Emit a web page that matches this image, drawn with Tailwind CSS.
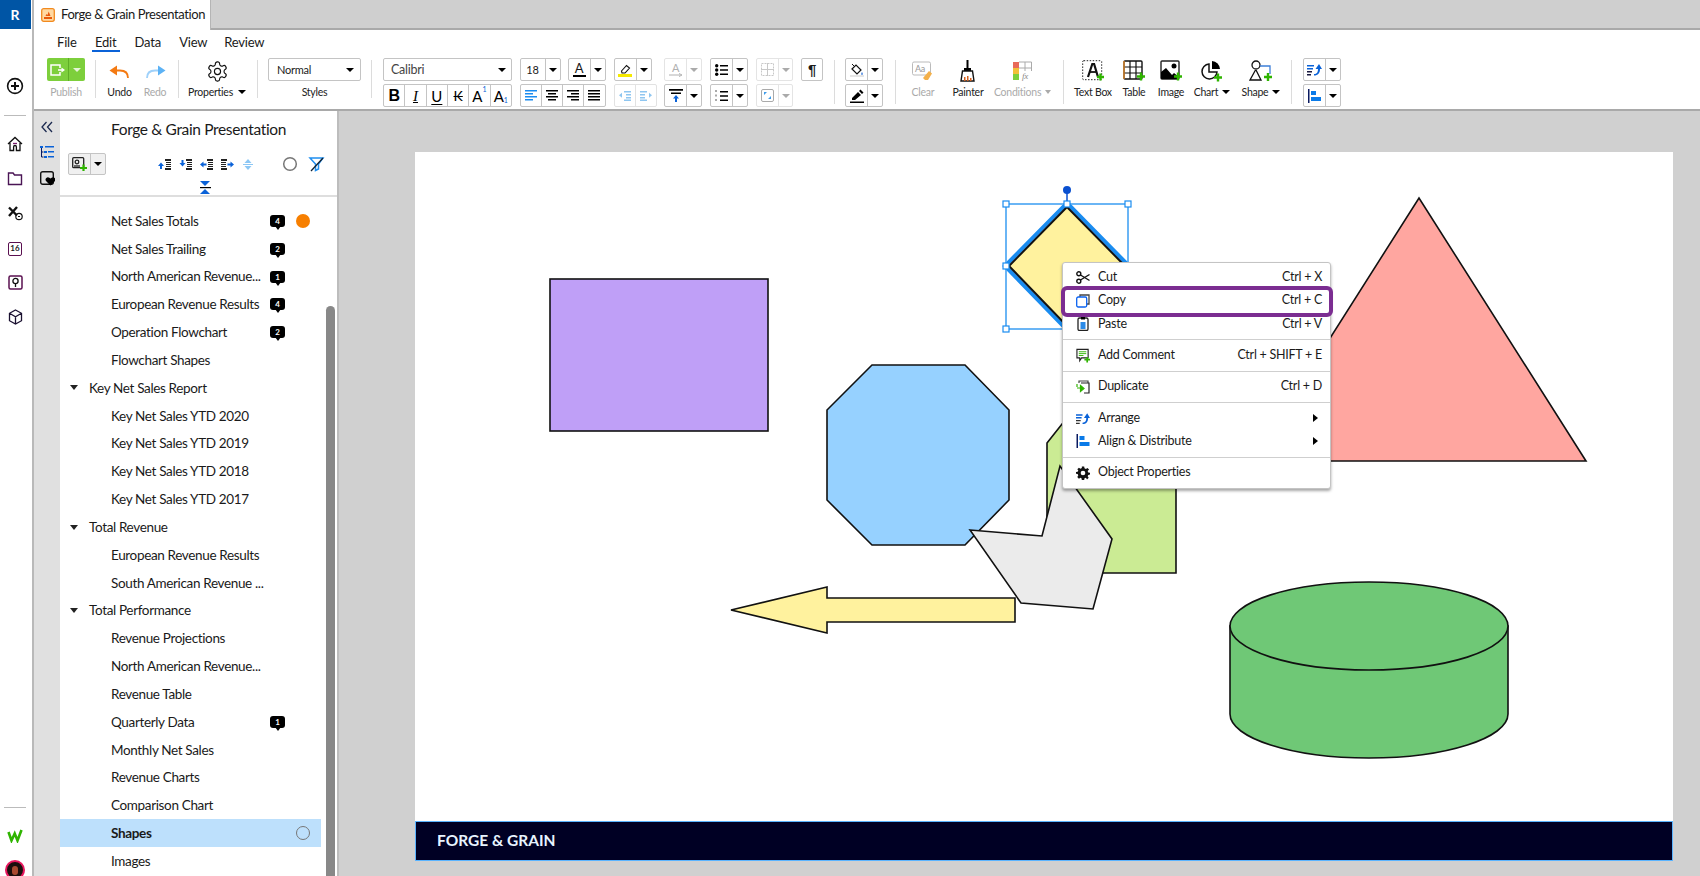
<!DOCTYPE html>
<html lang="en">
<head>
<meta charset="UTF-8">
<title>Forge &amp; Grain Presentation</title>
<script src="https://cdn.jsdelivr.net/npm/@tailwindcss/browser@4"></script>
</head>
<body class="h-screen w-[1700px] overflow-hidden flex bg-white font-[Lato,sans-serif] text-[#1a1a1a]">

<!-- left rail -->
<aside class="w-[34px] h-full shrink-0 flex flex-col items-center bg-white border-r-2 border-[#b9b9b9]">
  <div class="w-[32px] h-[29px] -ml-[2px] bg-[#0055a5] text-white font-bold text-[14px] flex items-center justify-center">R</div>
  <svg class="mt-[48px] -ml-[2px]" width="18" height="18" viewBox="0 0 18 18" fill="none" stroke="#111" stroke-width="1.6"><circle cx="9" cy="9" r="7.4"/><path d="M5 9h8M9 5v8" stroke-width="2"/></svg>
  <div class="w-[22px] h-px bg-[#bbb] mt-[20px] -ml-[2px]"></div>
  <svg class="mt-[20px] -ml-[2px]" width="16" height="16" viewBox="0 0 16 16" fill="none" stroke="#111" stroke-width="1.3"><path d="M1 8l7-6.5L15 8M3 7v7.5h3.6v-3.6a1.4 1.4 0 0 1 2.8 0v3.6H13V7"/><path d="M6 7.5h4" stroke="#7a1f6e"/></svg>
  <svg class="mt-[19px] -ml-[2px]" width="16" height="15" viewBox="0 0 16 15" fill="none" stroke="#4a1555" stroke-width="1.4"><path d="M1.5 13.5V2h4.600l1.400 2h7v9.500z"/></svg>
  <svg class="mt-[19px] -ml-[2px]" width="16" height="16" viewBox="0 0 16 16" fill="none" stroke="#111"><path d="M2 2.500l8 8M10 2L2 11" stroke-width="2.400"/><circle cx="12" cy="11.500" r="3.200" stroke-width="1.200"/><path d="M11 11.500h2"/></svg>
  <div class="mt-[21px] -ml-[2px] w-[14px] h-[14px] border-[1.5px] border-[#5a1050] rounded-[2px] text-[8px] leading-[10px] font-bold text-center">16</div>
  <svg class="mt-[19px] -ml-[2px]" width="15" height="15" viewBox="0 0 15 15" fill="none" stroke="#111" stroke-width="1.3"><rect x="1" y="1" width="13" height="13" rx="1.5" stroke="#5a1050" stroke-width="1.5"/><circle cx="7.5" cy="6" r="2.6"/><path d="M7.5 8.6V12"/></svg>
  <svg class="mt-[19px] -ml-[2px]" width="15" height="16" viewBox="0 0 15 16" fill="none" stroke="#1a1030" stroke-width="1.3"><path d="M7.5 1l6 3.300v7.400l-6 3.300-6-3.300V4.300zM1.500 4.300l6 3.400 6-3.400M7.500 7.700V15"/></svg>
  <div class="w-[22px] h-px bg-[#bbb] mt-auto -ml-[2px]"></div>
  <svg class="mt-[21px] -ml-[2px]" width="16" height="14" viewBox="0 0 16 14" fill="none" stroke="#2fb400" stroke-width="2.6"><path d="M1.500 3l3 8.500 3.200-7 2.800 7L14.500 1"/></svg>
  <div class="mt-[17px] mb-[-4px] -ml-[2px] w-[20px] h-[20px] rounded-full border-2 border-[#e8185f] bg-[#1a0f0d] flex items-center justify-center shrink-0"><div class="w-[6px] h-[9px] rounded-full bg-[#a84a30]"></div></div>
</aside>

<div class="flex-1 min-w-0 h-full flex flex-col">
  <!-- tab strip -->
  <div class="h-[30px] shrink-0 flex bg-[#cfcfcf] border-b-2 border-[#a9a9a9]">
    <div class="w-[177px] h-[30px] bg-white border-r border-[#b5b5b5] flex items-center pl-[7px] gap-[6px] text-[13px] tracking-[-0.4px] whitespace-nowrap">
      <svg width="14" height="14" viewBox="0 0 14 14"><rect x=".7" y=".7" width="12.600" height="12.600" rx="2" fill="#ffd9a3" stroke="#f28a1e" stroke-width="1.300"/><path d="M3 11V9h8v2zM4.500 8l1-2 1 1 1.200-3.500L9.500 8z" fill="#e8590c"/></svg>
      <span>Forge &amp; Grain Presentation</span>
    </div>
  </div>

  <!-- ribbon -->
  <div class="h-[81px] shrink-0 bg-white border-b-2 border-[#a9a9a9] flex flex-col">
    <div class="h-[28px] shrink-0 flex items-center pl-[23px] pb-[2px] text-[13px] tracking-[-0.2px]">
      <span class="w-[38px]">File</span>
      <span class="w-[39.5px] relative">Edit<span class="absolute left-[-3.5px] top-[17px] w-[28px] h-[2px] bg-[#0a62d8]"></span></span>
      <span class="w-[44.7px]">Data</span>
      <span class="w-[45px]">View</span>
      <span>Review</span>
    </div>
    <div class="flex items-start text-[10.5px] leading-[14px] tracking-[-0.25px]">
      <!-- publish -->
      <div class="ml-[13px] w-[38px] flex flex-col items-center">
        <div class="w-[38px] h-[23px] flex bg-[#7dcf3c] rounded-[2px]">
          <div class="w-[21px] flex items-center justify-center"><svg width="16" height="12" viewBox="0 0 16 12" fill="none" stroke="#fff" stroke-width="1.5"><path d="M10 4V1H1v10h9V8"/><path d="M8 6h4"/><path d="M11.500 3.500L15 6l-3.500 2.500z" fill="#fff" stroke="none"/></svg></div>
          <div class="flex-1 border-l border-[#5fae26] flex items-center justify-center"><div class="border-x-[4px] border-x-transparent border-t-[4px] border-t-white/80"></div></div>
        </div>
        <span class="mt-[4px] text-[#aaa]">Publish</span>
      </div>
      <div class="ml-[10px] mt-[2px] w-px h-[38px] bg-[#dcdcdc]"></div>
      <!-- undo redo -->
      <div class="ml-[5.5px] w-[36px] flex flex-col items-center">
        <div class="h-[26px] flex items-center"><svg width="21" height="15" viewBox="0 0 21 15"><path d="M19 14c0-5-3-7.500-8-7.500H7" fill="none" stroke="#f47a12" stroke-width="1.800"/><path d="M8 1.500v10L.5 6.500z" fill="#f47a12"/></svg></div>
        <span class="mt-[1px] text-[#222]">Undo</span>
      </div>
      <div class="w-[35px] flex flex-col items-center">
        <div class="h-[26px] flex items-center"><svg width="21" height="15" viewBox="0 0 21 15"><path d="M2 14c0-5 3-7.500 8-7.500h4" fill="none" stroke="#9fd1fa" stroke-width="1.800"/><path d="M13 1.500v10l7.500-5z" fill="#5cb2f5"/></svg></div>
        <span class="mt-[1px] text-[#aaa]">Redo</span>
      </div>
      <div class="ml-[5px] mt-[2px] w-px h-[38px] bg-[#dcdcdc]"></div>
      <!-- properties -->
      <div class="ml-[8.5px] w-[60px] flex flex-col items-center">
        <div class="h-[26px] flex items-center"><svg width="23" height="23" viewBox="0 0 24 24" fill="none" stroke="#111" stroke-width="1.200"><path d="M12.220 2h-.44a2 2 0 0 0-2 2v.18a2 2 0 0 1-1 1.730l-.43.25a2 2 0 0 1-2 0l-.15-.08a2 2 0 0 0-2.730.73l-.22.38a2 2 0 0 0 .73 2.730l.15.1a2 2 0 0 1 1 1.720v.51a2 2 0 0 1-1 1.740l-.15.09a2 2 0 0 0-.73 2.730l.22.38a2 2 0 0 0 2.730.73l.15-.08a2 2 0 0 1 2 0l.43.25a2 2 0 0 1 1 1.730V20a2 2 0 0 0 2 2h.44a2 2 0 0 0 2-2v-.18a2 2 0 0 1 1-1.730l.43-.25a2 2 0 0 1 2 0l.15.08a2 2 0 0 0 2.730-.73l.22-.39a2 2 0 0 0-.73-2.730l-.15-.08a2 2 0 0 1-1-1.740v-.5a2 2 0 0 1 1-1.740l.15-.09a2 2 0 0 0 .73-2.730l-.22-.38a2 2 0 0 0-2.730-.73l-.15.08a2 2 0 0 1-2 0l-.43-.25a2 2 0 0 1-1-1.730V4a2 2 0 0 0-2-2z"/><circle cx="12" cy="12" r="3.200"/></svg></div>
        <span class="mt-[1px] whitespace-nowrap text-[#222] flex items-center gap-[5px]">Properties<span class="border-x-[4px] border-x-transparent border-t-[4px] border-t-black"></span></span>
      </div>
      <div class="ml-[9.5px] mt-[2px] w-px h-[38px] bg-[#dcdcdc]"></div>
      <!-- styles -->
      <div class="ml-[10.5px] w-[93px] flex flex-col items-center">
        <div class="w-full h-[23px] border border-[#c4c4c4] rounded-[2px] flex items-center justify-between pl-[8px] pr-[6px] text-[11px]">Normal<span class="border-x-[4px] border-x-transparent border-t-[4px] border-t-black"></span></div>
        <span class="mt-[4px] text-[#222]">Styles</span>
      </div>
      <div class="ml-[10px] mt-[2px] w-px h-[38px] bg-[#dcdcdc]"></div>
      <!-- font -->
      <div class="ml-[11px] w-[129px] flex flex-col gap-[3px]">
        <div class="h-[23px] border border-[#c4c4c4] rounded-[2px] flex items-center justify-between pl-[7px] pr-[5px] text-[12.5px] text-[#444]">Calibri<span class="border-x-[4px] border-x-transparent border-t-[4px] border-t-black"></span></div>
        <div class="h-[23px] border border-[#c4c4c4] rounded-[2px] flex divide-x divide-[#c4c4c4] text-black tracking-normal">
          <div class="flex-1 flex items-center justify-center font-[Liberation_Sans,sans-serif] font-bold text-[16px]">B</div>
          <div class="flex-1 flex items-center justify-center font-[Liberation_Serif,serif] italic text-[15px] underline decoration-1 underline-offset-1">I</div>
          <div class="flex-1 flex items-center justify-center text-[15px] underline underline-offset-2">U</div>
          <div class="flex-1 flex items-center justify-center text-[14px] line-through">K</div>
          <div class="flex-1 flex items-center justify-center text-[15px]">A<sup class="text-[7px] text-[#0a62d8] -mt-[6px]">1</sup></div>
          <div class="flex-1 flex items-center justify-center text-[15px]">A<sub class="text-[7px] text-[#0a62d8] mt-[6px]">1</sub></div>
        </div>
      </div>
      <!-- size / colour / align -->
      <div class="ml-[7.5px] w-[86px] flex flex-col gap-[3px]">
        <div class="flex justify-between">
          <div class="w-[41px] h-[23px] border border-[#c4c4c4] rounded-[2px] flex"><div class="w-[24px] flex items-center justify-center text-[11px]">18</div><div class="flex-1 border-l border-[#c4c4c4] flex items-center justify-center"><span class="border-x-[4px] border-x-transparent border-t-[4px] border-t-black"></span></div></div>
          <div class="w-[38px] h-[23px] border border-[#c4c4c4] rounded-[2px] flex"><div class="w-[21px] flex flex-col items-center justify-center text-[13px] leading-[13px]">A<span class="w-[13px] h-[2px] bg-black"></span></div><div class="flex-1 border-l border-[#c4c4c4] flex items-center justify-center"><span class="border-x-[4px] border-x-transparent border-t-[4px] border-t-black"></span></div></div>
        </div>
        <div class="h-[23px] border border-[#c4c4c4] rounded-[2px] flex divide-x divide-[#c4c4c4]">
          <div class="flex-1 flex items-center justify-center"><svg width="12" height="11" viewBox="0 0 12 11" fill="#1a8cf0"><path d="M0 0h12v1.500H0zM0 3h8v1.500H0zM0 6h12v1.500H0zM0 9h8v1.500H0z"/></svg></div>
          <div class="flex-1 flex items-center justify-center"><svg width="12" height="11" viewBox="0 0 12 11"><path d="M0 0h12v1.500H0zM2 3h8v1.500H2zM0 6h12v1.500H0zM2 9h8v1.500H2z"/></svg></div>
          <div class="flex-1 flex items-center justify-center"><svg width="12" height="11" viewBox="0 0 12 11"><path d="M0 0h12v1.500H0zM4 3h8v1.500H4zM0 6h12v1.500H0zM4 9h8v1.500H4z"/></svg></div>
          <div class="flex-1 flex items-center justify-center"><svg width="12" height="11" viewBox="0 0 12 11"><path d="M0 0h12v1.500H0zM0 3h12v1.500H0zM0 6h12v1.500H0zM0 9h12v1.500H0z"/></svg></div>
        </div>
      </div>
      <!-- highlight / indent -->
      <div class="ml-[8px] w-[43px] flex flex-col gap-[3px]">
        <div class="w-[38px] h-[23px] border border-[#c4c4c4] rounded-[2px] flex"><div class="w-[21px] flex items-center justify-center"><svg width="14" height="14" viewBox="0 0 14 14"><path d="M3.500 8l5-5.500 3 2.500-4.500 5H4z" fill="#fff" stroke="#111" stroke-width="1.100"/><path d="M0 11h14v3H0z" fill="#f6ea00"/></svg></div><div class="flex-1 border-l border-[#c4c4c4] flex items-center justify-center"><span class="border-x-[4px] border-x-transparent border-t-[4px] border-t-black"></span></div></div>
        <div class="h-[23px] border border-[#e2e2e2] rounded-[2px] flex divide-x divide-[#e2e2e2]">
          <div class="flex-1 flex items-center justify-center"><svg width="12" height="10" viewBox="0 0 12 10" fill="#8fc6f0"><path d="M5 0h7v1.500H5zM7 3h5v1.500H7zM7 6h5v1.500H7zM5 8.500h7V10H5zM0 4.200l3-2.500v5z"/></svg></div>
          <div class="flex-1 flex items-center justify-center"><svg width="12" height="10" viewBox="0 0 12 10" fill="#8fc6f0"><path d="M0 0h7v1.500H0zM0 3h5v1.500H0zM0 6h5v1.500H0zM0 8.500h7V10H0zM12 4.200l-3-2.500v5z"/></svg></div>
        </div>
      </div>
      <!-- text direction / valign -->
      <div class="ml-[7.5px] w-[38px] flex flex-col gap-[3px]">
        <div class="h-[23px] border border-[#e4e4e4] rounded-[2px] flex"><div class="w-[21px] flex flex-col items-center justify-center text-[11px] leading-[11px] text-[#b0b0b0]">A<svg width="14" height="4" viewBox="0 0 14 4"><path d="M0 2h11M10 .5L13 2l-3 1.500" stroke="#b0b0b0" fill="none"/></svg></div><div class="flex-1 border-l border-[#e4e4e4] flex items-center justify-center"><span class="border-x-[4px] border-x-transparent border-t-[4px] border-t-[#aaa]"></span></div></div>
        <div class="h-[23px] border border-[#c4c4c4] rounded-[2px] flex"><div class="w-[21px] flex items-center justify-center"><svg width="14" height="13" viewBox="0 0 14 13"><path d="M0 0h14v1.800H0zM2 3.500h10v1.500H2z"/><path d="M7 6l3 3.500H8V13H6V9.500H4z" fill="#0a62d8"/></svg></div><div class="flex-1 border-l border-[#c4c4c4] flex items-center justify-center"><span class="border-x-[4px] border-x-transparent border-t-[4px] border-t-black"></span></div></div>
      </div>
      <!-- lists -->
      <div class="ml-[7.5px] w-[38px] flex flex-col gap-[3px]">
        <div class="h-[23px] border border-[#c4c4c4] rounded-[2px] flex"><div class="w-[21px] flex items-center justify-center"><svg width="13" height="12" viewBox="0 0 13 12"><circle cx="1.700" cy="1.700" r="1.700"/><circle cx="1.700" cy="6" r="1.700"/><circle cx="1.700" cy="10.300" r="1.700"/><path d="M5 1h8v1.500H5zM5 5.200h8v1.500H5zM5 9.500h8V11H5z"/></svg></div><div class="flex-1 border-l border-[#c4c4c4] flex items-center justify-center"><span class="border-x-[4px] border-x-transparent border-t-[4px] border-t-black"></span></div></div>
        <div class="h-[23px] border border-[#c4c4c4] rounded-[2px] flex"><div class="w-[21px] flex items-center justify-center"><svg width="13" height="12" viewBox="0 0 13 12"><path d="M1 0v2M1 4.500v2M1 9v2" stroke="#555" fill="none"/><path d="M5 1h8v1.500H5zM5 5.200h8v1.500H5zM5 9.500h8V11H5z"/></svg></div><div class="flex-1 border-l border-[#c4c4c4] flex items-center justify-center"><span class="border-x-[4px] border-x-transparent border-t-[4px] border-t-black"></span></div></div>
      </div>
      <!-- table borders -->
      <div class="ml-[8.5px] w-[37px] flex flex-col gap-[3px]">
        <div class="h-[23px] border border-[#e4e4e4] rounded-[2px] flex"><div class="w-[21px] flex items-center justify-center"><svg width="13" height="13" viewBox="0 0 13 13" fill="none" stroke="#c8c8c8"><rect x=".5" y=".5" width="12" height="12" stroke-dasharray="2 1"/><path d="M6.500 0v13M0 6.500h13"/></svg></div><div class="flex-1 border-l border-[#e4e4e4] flex items-center justify-center"><span class="border-x-[4px] border-x-transparent border-t-[4px] border-t-[#aaa]"></span></div></div>
        <div class="h-[23px] border border-[#e4e4e4] rounded-[2px] flex"><div class="w-[21px] flex items-center justify-center"><svg width="13" height="13" viewBox="0 0 13 13"><rect x=".5" y=".5" width="12" height="12" rx="1.500" fill="none" stroke="#aaa"/><path d="M3 3h3L3 6zM10 10H7l3-3z" fill="#3d9be9"/></svg></div><div class="flex-1 border-l border-[#e4e4e4] flex items-center justify-center"><span class="border-x-[4px] border-x-transparent border-t-[4px] border-t-[#aaa]"></span></div></div>
      </div>
      <!-- pilcrow -->
      <div class="ml-[8px] w-[22px] h-[23px] border border-[#c4c4c4] rounded-[2px] flex items-center justify-center text-[15px] font-bold font-[Liberation_Sans,sans-serif]">¶</div>
      <div class="ml-[11px] mt-[2px] w-px h-[44px] bg-[#dcdcdc]"></div>
      <!-- fill / pen -->
      <div class="ml-[10.3px] w-[38px] flex flex-col gap-[3px]">
        <div class="h-[23px] border border-[#c4c4c4] rounded-[2px] flex"><div class="w-[21px] flex items-center justify-center"><svg width="14" height="14" viewBox="0 0 14 14" fill="none"><path d="M2 6l4-4 5 5-4 4z" stroke="#111" stroke-width="1.200"/><path d="M2 1l3 3" stroke="#111"/><path d="M12 9c1 1.500 1 3 0 3s-1-1.500 0-3" fill="#2a6fd8"/><path d="M0 13h14" stroke="#ddd" stroke-width="1.500"/></svg></div><div class="flex-1 border-l border-[#c4c4c4] flex items-center justify-center"><span class="border-x-[4px] border-x-transparent border-t-[4px] border-t-black"></span></div></div>
        <div class="h-[23px] border border-[#c4c4c4] rounded-[2px] flex"><div class="w-[21px] flex items-center justify-center"><svg width="14" height="14" viewBox="0 0 14 14"><path d="M2 9l6-6 3 3-6 5H2zM9 2l1.500-1.500 3 3L12 5z"/><path d="M0 12.500h14V14H0z"/></svg></div><div class="flex-1 border-l border-[#c4c4c4] flex items-center justify-center"><span class="border-x-[4px] border-x-transparent border-t-[4px] border-t-black"></span></div></div>
      </div>
      <div class="ml-[11.3px] mt-[2px] w-px h-[44px] bg-[#dcdcdc]"></div>
      <!-- clear painter conditions -->
      <div class="ml-[5.4px] w-[44px] flex flex-col items-center">
        <div class="h-[26px] flex items-center"><svg width="21" height="20" viewBox="0 0 21 20"><rect x=".5" y="1" width="18" height="13" rx="1.500" fill="#fff" stroke="#bbb"/><text x="3" y="11" font-size="9" font-family="Lato" fill="#999">Aa</text><path d="M11 17l6-7 3 2.500L16 19h-3z" fill="#f3b04a"/></svg></div>
        <span class="mt-[1px] text-[#aaa]">Clear</span>
      </div>
      <div class="ml-[1px] w-[44px] flex flex-col items-center">
        <div class="h-[26px] flex items-center"><svg width="17" height="22" viewBox="0 0 17 22"><path d="M7.500 0h2v8h-2z"/><path d="M5 8h7v3H5z"/><path d="M3.500 11h10l1.500 10H2z" fill="#fff" stroke="#111" stroke-width="1.400"/><path d="M5 21v-4h1.500v4zM8 21v-5h1.500v5zM11 21v-3h1.500v3z" fill="#d9621e"/></svg></div>
        <span class="mt-[1px] text-[#222]">Painter</span>
      </div>
      <div class="ml-[2.6px] w-[60px] flex flex-col items-center">
        <div class="h-[26px] flex items-center"><svg width="19" height="20" viewBox="0 0 19 20" fill="none"><rect x="0" y="1" width="6" height="6" fill="#e86a5a"/><rect x="0" y="7" width="6" height="6" fill="#f2c038"/><rect x="0" y="13" width="6" height="6" fill="#7dcf3c"/><path d="M6 1h12.500v6H6M12 1v6M12 7v3M18.500 7v3" stroke="#aaa"/><text x="9" y="18" font-size="9" font-style="italic" font-family="Liberation Serif" fill="#888">fx</text></svg></div>
        <span class="mt-[1px] whitespace-nowrap text-[#aaa] flex items-center gap-[4px]">Conditions<span class="border-x-[3.5px] border-x-transparent border-t-[4px] border-t-[#aaa]"></span></span>
      </div>
      <div class="ml-[10px] mt-[2px] w-px h-[44px] bg-[#dcdcdc]"></div>
      <!-- insert -->
      <div class="ml-[5.4px] w-[48px] flex flex-col items-center">
        <div class="h-[26px] flex items-center"><svg width="22" height="22" viewBox="0 0 22 22"><rect x=".7" y=".7" width="19" height="19" rx="1" fill="none" stroke="#222" stroke-dasharray="1.500 1.500"/><path d="M6 17L10.300 4h1.800L16 17" fill="none" stroke="#111" stroke-width="2.200"/><path d="M7.500 12h7" stroke="#111" stroke-width="1.800"/><path d="M15 17h7M18.500 13.500v7" stroke="#2fb400" stroke-width="2.400"/></svg></div>
        <span class="mt-[1px] whitespace-nowrap text-[#222]">Text Box</span>
      </div>
      <div class="w-[34px] flex flex-col items-center">
        <div class="h-[26px] flex items-center"><svg width="22" height="22" viewBox="0 0 22 22" fill="none"><rect x="1" y="1" width="18" height="18" rx="1" stroke="#111" stroke-width="1.400"/><path d="M7 1v18M13 1v18M1 7h18M1 13h18" stroke="#111" stroke-width="1.200"/><path d="M1 1v18" stroke="#e28a2a" stroke-width="1.400"/><path d="M14 16.500h8M18 12.500v8" stroke="#2fb400" stroke-width="2.400"/></svg></div>
        <span class="mt-[1px] text-[#222]">Table</span>
      </div>
      <div class="ml-[1px] w-[38px] flex flex-col items-center">
        <div class="h-[26px] flex items-center"><svg width="22" height="22" viewBox="0 0 22 22"><rect x="1" y="1" width="18" height="18" rx="1" fill="#fff" stroke="#222" stroke-width="1.400"/><path d="M1 12l5-4 6 7 2-2 5 4v2H1z"/><circle cx="14" cy="6" r="2.500"/><path d="M14 16.500h8M18 12.500v8" stroke="#2fb400" stroke-width="2.400"/></svg></div>
        <span class="mt-[1px] text-[#222]">Image</span>
      </div>
      <div class="ml-[1px] w-[42px] flex flex-col items-center">
        <div class="h-[26px] flex items-center"><svg width="22" height="22" viewBox="0 0 22 22"><path d="M8 4a7.500 7.500 0 1 0 8 8H8z" fill="none" stroke="#111" stroke-width="1.500"/><path d="M11 1a8.500 8.500 0 0 1 8 8h-8z"/><path d="M13 17.500h8M17 13.500v8" stroke="#2fb400" stroke-width="2.400"/></svg></div>
        <span class="mt-[1px] whitespace-nowrap text-[#222] flex items-center gap-[4px]">Chart<span class="border-x-[4px] border-x-transparent border-t-[4px] border-t-black"></span></span>
      </div>
      <div class="ml-[6px] w-[44px] flex flex-col items-center">
        <div class="h-[26px] flex items-center"><svg width="24" height="22" viewBox="0 0 24 22" fill="none" stroke="#111" stroke-width="1.300"><circle cx="7" cy="5" r="4"/><path d="M11 6h10v8" stroke="#3d7fd8"/><path d="M6.500 10L1 20h11L7 10"/><path d="M15 17h8M19 13v8" stroke="#2fb400" stroke-width="2.400"/></svg></div>
        <span class="mt-[1px] whitespace-nowrap text-[#222] flex items-center gap-[4px]">Shape<span class="border-x-[4px] border-x-transparent border-t-[4px] border-t-black"></span></span>
      </div>
      <div class="ml-[8px] mt-[2px] w-px h-[44px] bg-[#dcdcdc]"></div>
      <!-- arrange / align -->
      <div class="ml-[11px] w-[38px] flex flex-col gap-[3px]">
        <div class="h-[23px] border border-[#c4c4c4] rounded-[2px] flex"><div class="w-[21px] flex items-center justify-center"><svg width="15" height="13" viewBox="0 0 15 13"><path d="M0 2h7v1.500H0zM0 5h6v1.500H0z" fill="#0a62d8"/><path d="M0 8h5v1.500H0zM0 11h4v1.500H0z" fill="#1a1a40"/><path d="M7 11c3 0 4-2 4-5H8.500L12 1l3 5h-2c0 4-2 6.500-6 6.500z" fill="#0a62d8"/></svg></div><div class="flex-1 border-l border-[#c4c4c4] flex items-center justify-center"><span class="border-x-[4px] border-x-transparent border-t-[4px] border-t-black"></span></div></div>
        <div class="h-[23px] border border-[#c4c4c4] rounded-[2px] flex"><div class="w-[21px] flex items-center justify-center"><svg width="13" height="14" viewBox="0 0 13 14"><path d="M0 0h1.500v14H0z" fill="#0a1a60"/><path d="M3 2h5v4H3zM3 8h10v4H3z" fill="#0a7ae8"/></svg></div><div class="flex-1 border-l border-[#c4c4c4] flex items-center justify-center"><span class="border-x-[4px] border-x-transparent border-t-[4px] border-t-black"></span></div></div>
      </div>
    </div>
  </div>

  <!-- work area -->
  <div class="flex-1 min-h-0 flex">
    <!-- mini column -->
    <div class="w-[26px] shrink-0 bg-[#e0e0e0] flex flex-col items-center pt-[10px]">
      <svg width="12" height="12" viewBox="0 0 12 12" fill="none" stroke="#1c2a50" stroke-width="1.300"><path d="M5.500 1L1 6l4.500 5M11 1L6.500 6l4.500 5"/></svg>
      <svg class="mt-[12px]" width="14" height="14" viewBox="0 0 14 14"><path d="M0 1h3v2H0zM5 1h9v1.500H5zM4 6h3v2H4zM8 6h6v1.500H8zM4 11h3v2H4zM8 11h6v1.500H8z" fill="#0a62d8"/><path d="M1.500 3v9h2M1.500 7h2" fill="none" stroke="#0a1a60"/></svg>
      <svg class="mt-[12px]" width="15" height="15" viewBox="0 0 15 15"><rect x=".7" y=".7" width="12.600" height="12.600" rx="2" fill="none" stroke="#111" stroke-width="1.400"/><path d="M10.500 14.500L6 10a2.400 2.400 0 0 1 3.400-3.300l1.100.9 1.100-.9A2.400 2.400 0 0 1 15 10z"/></svg>
    </div>
    <!-- report panel -->
    <div class="w-[279px] shrink-0 bg-white border-r-2 border-[#bdbdbd] flex flex-col">
      <div class="h-[86px] shrink-0 border-b-2 border-[#dedede] relative">
        <div class="h-[37px] flex items-center justify-center text-[15.5px] tracking-[-0.35px]">Forge &amp; Grain Presentation</div>
        <div class="ml-[8px] mt-[5px] w-[38px] h-[22px] border border-[#c4c4c4] rounded-[2px] flex bg-[#f0f0f0]">
          <div class="w-[21px] flex items-center justify-center"><svg width="15" height="14" viewBox="0 0 15 14" fill="none" stroke="#222" stroke-width="1.300"><rect x=".7" y=".7" width="11" height="10" rx="1"/><circle cx="5" cy="5" r="1.800"/><path d="M2 9h6"/><path d="M8 11h7M11.500 7.500V14" stroke="#2fb400" stroke-width="2.200"/></svg></div>
          <div class="flex-1 border-l border-[#c4c4c4] flex items-center justify-center"><span class="border-x-[4px] border-x-transparent border-t-[4px] border-t-black"></span></div>
        </div>
        <!-- tool strip lies over the header and wraps to a second line in the app -->
        <svg class="absolute left-[96px] top-[45px]" width="170" height="18" viewBox="96 48 170 18">
          <path d="M98 58l3-3.500 3 3.500h-2v3h-2v-3z" fill="#0a62d8"/><path d="M105 51h6v2h-6zM106 54h5v1h-5zM106 56h5v1h-5zM106 58h5v1h-5zM105 60h6v2h-6z" fill="#222"/>
          <path d="M119.500 55l3 3.500 3-3.500h-2v-3h-2v3z" fill="#0a62d8"/><path d="M126 51h6v2h-6zM127 54h5v1h-5zM127 56h5v1h-5zM127 58h5v1h-5zM126 60h6v2h-6z" fill="#222"/>
          <path d="M140 56.500l3.500-3v2h3v2h-3v2z" fill="#0a62d8"/><path d="M147 51h6v2h-6zM148 54h5v1h-5zM148 56h5v1h-5zM148 58h5v1h-5zM147 60h6v2h-6z" fill="#222"/>
          <path d="M161 51h6v2h-6zM161 54h5v1h-5zM161 56h5v1h-5zM161 58h5v1h-5zM161 60h6v2h-6z" fill="#222"/><path d="M174 56.500l-3.500-3v2h-3v2h3v2z" fill="#0a62d8"/>
          <path d="M188 51l3.500 4h-7zM188 62l3.500-4h-7z" fill="#8cc7f5"/><path d="M183 56.500h10" stroke="#8cc7f5"/>
          <circle cx="230" cy="56" r="6.300" fill="none" stroke="#777" stroke-width="1.500"/>
          <path d="M250 50h13l-4.500 6v5l-3 1.500V56z" fill="none" stroke="#1f8ef0" stroke-width="1.500"/><path d="M251 63l12-13" stroke="#123" stroke-width="1.300"/>
        </svg>
        <svg class="absolute left-[139px] top-[70px]" width="13" height="13" viewBox="0 0 13 13"><path d="M1 0h10L6 5z" fill="#0a62d8"/><path d="M1 6h11v1.200H1z"/><path d="M1 13h10L6 8z" fill="#0a62d8"/></svg>
      </div>
      <div class="flex-1 min-h-0 flex overflow-hidden text-[13.5px] tracking-[-0.35px]">
        <div class="w-[261px] shrink-0 pt-[10px]">
          <div class="flex items-center h-[27.83px] pl-[51px]"><span class="w-[159px] whitespace-nowrap">Net Sales Totals</span><span class="relative w-[15px] h-[12px] bg-black rounded-[3px] text-white text-[8px] leading-[12px] font-bold text-center">4<span class="absolute left-[5px] top-[11px] border-x-[3px] border-x-transparent border-t-[4px] border-t-black"></span></span><span class="ml-[11px] w-[14px] h-[14px] rounded-full bg-[#f77f00]"></span></div>
          <div class="flex items-center h-[27.83px] pl-[51px]"><span class="w-[159px] whitespace-nowrap">Net Sales Trailing</span><span class="relative w-[15px] h-[12px] bg-black rounded-[3px] text-white text-[8px] leading-[12px] font-bold text-center">2<span class="absolute left-[5px] top-[11px] border-x-[3px] border-x-transparent border-t-[4px] border-t-black"></span></span></div>
          <div class="flex items-center h-[27.83px] pl-[51px]"><span class="w-[159px] whitespace-nowrap">North American Revenue...</span><span class="relative w-[15px] h-[12px] bg-black rounded-[3px] text-white text-[8px] leading-[12px] font-bold text-center">1<span class="absolute left-[5px] top-[11px] border-x-[3px] border-x-transparent border-t-[4px] border-t-black"></span></span></div>
          <div class="flex items-center h-[27.83px] pl-[51px]"><span class="w-[159px] whitespace-nowrap">European Revenue Results</span><span class="relative w-[15px] h-[12px] bg-black rounded-[3px] text-white text-[8px] leading-[12px] font-bold text-center">4<span class="absolute left-[5px] top-[11px] border-x-[3px] border-x-transparent border-t-[4px] border-t-black"></span></span></div>
          <div class="flex items-center h-[27.83px] pl-[51px]"><span class="w-[159px] whitespace-nowrap">Operation Flowchart</span><span class="relative w-[15px] h-[12px] bg-black rounded-[3px] text-white text-[8px] leading-[12px] font-bold text-center">2<span class="absolute left-[5px] top-[11px] border-x-[3px] border-x-transparent border-t-[4px] border-t-black"></span></span></div>
          <div class="flex items-center h-[27.83px] pl-[51px]">Flowchart Shapes</div>
          <div class="flex items-center h-[27.83px] pl-[10px]"><span class="border-x-[4.5px] border-x-transparent border-t-[5px] border-t-[#222] mr-[11px]"></span>Key Net Sales Report</div>
          <div class="flex items-center h-[27.83px] pl-[51px]">Key Net Sales YTD 2020</div>
          <div class="flex items-center h-[27.83px] pl-[51px]">Key Net Sales YTD 2019</div>
          <div class="flex items-center h-[27.83px] pl-[51px]">Key Net Sales YTD 2018</div>
          <div class="flex items-center h-[27.83px] pl-[51px]">Key Net Sales YTD 2017</div>
          <div class="flex items-center h-[27.83px] pl-[10px]"><span class="border-x-[4.5px] border-x-transparent border-t-[5px] border-t-[#222] mr-[11px]"></span>Total Revenue</div>
          <div class="flex items-center h-[27.83px] pl-[51px]">European Revenue Results</div>
          <div class="flex items-center h-[27.83px] pl-[51px]">South American Revenue ...</div>
          <div class="flex items-center h-[27.83px] pl-[10px]"><span class="border-x-[4.5px] border-x-transparent border-t-[5px] border-t-[#222] mr-[11px]"></span>Total Performance</div>
          <div class="flex items-center h-[27.83px] pl-[51px]">Revenue Projections</div>
          <div class="flex items-center h-[27.83px] pl-[51px]">North American Revenue...</div>
          <div class="flex items-center h-[27.83px] pl-[51px]">Revenue Table</div>
          <div class="flex items-center h-[27.83px] pl-[51px]"><span class="w-[159px] whitespace-nowrap">Quarterly Data</span><span class="relative w-[15px] h-[12px] bg-black rounded-[3px] text-white text-[8px] leading-[12px] font-bold text-center">1<span class="absolute left-[5px] top-[11px] border-x-[3px] border-x-transparent border-t-[4px] border-t-black"></span></span></div>
          <div class="flex items-center h-[27.83px] pl-[51px]">Monthly Net Sales</div>
          <div class="flex items-center h-[27.83px] pl-[51px]">Revenue Charts</div>
          <div class="flex items-center h-[27.83px] pl-[51px]">Comparison Chart</div>
          <div class="flex items-center h-[27.83px] pl-[51px] bg-[#bde0fc] font-bold"><span class="w-[185px]">Shapes</span><span class="w-[14px] h-[14px] rounded-full border-[1.5px] border-[#777]"></span></div>
          <div class="flex items-center h-[27.83px] pl-[51px]">Images</div>
        </div>
        <div class="ml-[5px] w-[9px] pt-[109px] flex flex-col"><div class="w-[9px] flex-1 bg-[#888] rounded-t-[5px]"></div></div>
      </div>
    </div>

    <!-- slide canvas -->
    <div class="flex-1 min-w-0 bg-[#d0d0d0] pl-[76px] pt-[41px]">
      <div class="relative w-[1258px] h-[709px] bg-white flex flex-col justify-end">
        <svg class="absolute inset-0" width="1258" height="709" viewBox="415 152 1258 709" stroke="#111" stroke-width="1.6">
          <rect x="550" y="279" width="218" height="152" fill="#bf9ff7"/>
          <path d="M872 365h93l44 45v90l-44 45h-93l-45-45v-90z" fill="#96d1ff"/>
          <path d="M1252 461L1419 198l167 263z" fill="#ffa6a0"/>
          <path d="M1047 443l38-48h91v178h-129z" fill="#cbeb94"/>
          <path d="M731 610l96-23v11h188v24H827v11z" fill="#fff29e"/>
          <path d="M970 530l72 6 18-70 52 73-19 70-72-6z" fill="#ebebeb"/>
          <path d="M1230 626v88c0 24 62 44 139 44s139-20 139-44v-88z" fill="#6fc876"/>
          <ellipse cx="1369" cy="626" rx="139" ry="44" fill="#6fc876"/>
          <path d="M1067 203l62 63-62 64-62-64z" fill="none" stroke="#1a8cf0" stroke-width="4"/>
          <path d="M1067 207l58 59-58 60-58-60z" fill="#fff29e" stroke="#111" stroke-width="2"/>
          <g fill="none" stroke="#3a9df2" stroke-width="1.5">
            <rect x="1006" y="204" width="122" height="125"/>
            <path d="M1067 204v-12" stroke="#0a50d0"/>
          </g>
          <circle cx="1067" cy="190" r="4" fill="#0a50d0" stroke="none"/>
          <g fill="#fff" stroke="#1a8cf0" stroke-width="1.2">
            <rect x="1003" y="201" width="6" height="6"/><rect x="1064" y="201" width="6" height="6"/><rect x="1125" y="201" width="6" height="6"/><rect x="1003" y="263" width="6" height="6"/><rect x="1003" y="326" width="6" height="6"/>
          </g>
        </svg>

        <!-- context menu -->
        <div class="absolute left-[647px] top-[110px] w-[269px] h-[227px] bg-white border border-[#c4c4c4] rounded-[3px] shadow-[0_2px_3px_rgba(0,0,0,0.35)] text-[12.5px] tracking-[-0.25px]">
          <div class="pt-[3px] pb-[3.7px] border-b border-[#cfcfcf]">
            <div class="h-[23.2px] flex items-center pl-[13px] pr-[8px]"><svg class="w-[14px] mr-[8px]" width="14" height="13" viewBox="0 0 14 13" fill="none" stroke="#111" stroke-width="1.4"><circle cx="2.800" cy="2.800" r="2"/><circle cx="2.800" cy="10.200" r="2"/><path d="M4.500 4l9 5.500M4.500 9l9-5.500"/></svg><span>Cut</span><span class="ml-auto">Ctrl + X</span></div>
            <div class="h-[23.2px] flex items-center pl-[13px] pr-[8px]"><svg class="w-[14px] mr-[8px]" width="14" height="14" viewBox="0 0 14 14" fill="none" stroke-width="1.3"><path d="M4 3V1h9v9h-2" stroke="#444"/><rect x=".7" y="3" width="10" height="10" rx="1.500" stroke="#0a62f0"/></svg><span>Copy</span><span class="ml-auto">Ctrl + C</span></div>
            <div class="h-[23.2px] flex items-center pl-[13px] pr-[8px]"><svg class="w-[14px] mr-[8px]" width="14" height="15" viewBox="0 0 14 15"><rect x="2" y="2" width="10" height="12.500" rx="1.500" fill="#fff" stroke="#222" stroke-width="1.300"/><path d="M5 .5h4v3H5z"/><path d="M4.500 6h5v7h-5z" fill="#2a8ae8"/></svg><span>Paste</span><span class="ml-auto">Ctrl + V</span></div>
          </div>
          <div class="pt-[3.5px] pb-[3.7px] border-b border-[#cfcfcf]">
            <div class="h-[23.2px] flex items-center pl-[13px] pr-[8px]"><svg class="w-[14px] mr-[8px]" width="15" height="15" viewBox="0 0 15 15" fill="none"><path d="M1 1h12v9H6l-2 3v-3H1z" stroke="#222" stroke-width="1.200"/><path d="M3 3.500h8M3 5.500h8M3 7.500h5" stroke="#2fb400"/><path d="M9 12h6M12 9v6" stroke="#2fb400" stroke-width="1.800"/></svg><span>Add Comment</span><span class="ml-auto">Ctrl + SHIFT + E</span></div>
          </div>
          <div class="pt-[3.5px] pb-[3.7px] border-b border-[#cfcfcf]">
            <div class="h-[23.2px] flex items-center pl-[13px] pr-[8px]"><svg class="w-[14px] mr-[8px]" width="14" height="14" viewBox="0 0 14 14" fill="none" stroke-width="1.2"><path d="M3 3V1h9v2" stroke="#444"/><path d="M5 3h8v10H8" stroke="#222"/><path d="M1 4v3" stroke="#2fb400"/><path d="M1 8h4M4.500 5.500L8 8.500l-3.500 3z" fill="#2fb400" stroke="#2fb400"/></svg><span>Duplicate</span><span class="ml-auto">Ctrl + D</span></div>
          </div>
          <div class="pt-[3.5px] pb-[3.7px] border-b border-[#cfcfcf]">
            <div class="h-[23.2px] flex items-center pl-[13px] pr-[8px]"><svg class="w-[14px] mr-[8px]" width="14" height="13" viewBox="0 0 15 13"><path d="M0 2h7v1.500H0zM0 5h6v1.500H0z" fill="#0a62d8"/><path d="M0 8h5v1.500H0zM0 11h4v1.500H0z" fill="#333"/><path d="M7 11c3 0 4-2 4-5H8.500L12 1l3 5h-2c0 4-2 6.500-6 6.500z" fill="#0a62d8"/></svg><span>Arrange</span><span class="ml-auto mr-[4px] border-y-[4.5px] border-y-transparent border-l-[5px] border-l-black"></span></div>
            <div class="h-[23.2px] flex items-center pl-[13px] pr-[8px]"><svg class="w-[14px] mr-[8px]" width="13" height="14" viewBox="0 0 13 14"><path d="M0 0h1.500v14H0z" fill="#0a1a60"/><path d="M3 2h5v4H3zM3 8h10v4H3z" fill="#0a7ae8"/></svg><span>Align &amp; Distribute</span><span class="ml-auto mr-[4px] border-y-[4.5px] border-y-transparent border-l-[5px] border-l-black"></span></div>
          </div>
          <div class="pt-[3.5px]">
            <div class="h-[23.2px] flex items-center pl-[13px] pr-[8px]"><svg class="w-[14px] mr-[8px]" width="14" height="14" viewBox="0 0 24 24" fill="#111"><path d="M10 1h4l.6 3 2.400 1 2.600-1.700 2.800 2.800L20 8.700l1 2.400 3 .6v3l-3 .6-1 2.400 1.700 2.600-2.800 2.800L17 20l-2.400 1-.6 3h-4l-.6-3L7.600 20 5 21.700l-2.800-2.800L3.900 16.300l-1-2.400-3-.6v-3l3-.6 1-2.400L2.200 5.700 5 2.900l2.600 1.700L10 3.600zM12 8a4 4 0 1 0 0 8 4 4 0 0 0 0-8z" fill-rule="evenodd"/></svg><span>Object Properties</span></div>
          </div>
          <!-- purple callout round the Copy row -->
          <div class="absolute left-[-2px] top-[23px] w-[272px] h-[31px] border-[4px] border-[#7b2d91] rounded-[6px]"></div>
        </div>

        <div class="relative h-[40px] bg-[#000024] border border-[#5ab4ff] flex items-center pl-[21px] text-[15.5px] font-bold text-[#e8f4ff]">FORGE &amp; GRAIN</div>
      </div>
    </div>
  </div>
</div>

</body>
</html>
